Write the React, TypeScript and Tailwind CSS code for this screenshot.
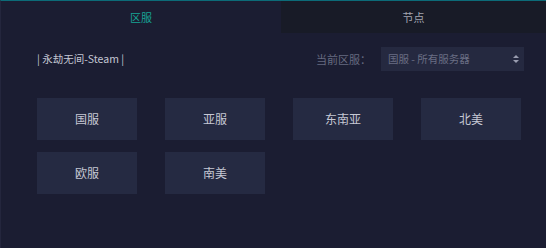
const regions = ["国服", "亚服", "东南亚", "北美", "欧服", "南美"];

export default function App() {
  return (
    <div
      className="w-[546px] h-[248px] bg-[#1b1d32] border-t border-[#0c6b78] border-l border-l-[#24263d] overflow-hidden flex flex-col"
      style={{ fontFamily: '"Noto Sans CJK SC", "Noto Sans", sans-serif' }}
    >
      {/* Tabs */}
      <div className="flex h-[32px] shrink-0">
        <div className="w-[280px] flex items-center justify-center text-[11px] text-[#16a394]">
          区服
        </div>
        <div className="flex-1 flex items-center justify-center bg-[#181b27] text-[11px] text-[#a3a5b0]">
          节点
        </div>
      </div>

      {/* Header row */}
      <div className="flex items-center justify-between pl-[36px] pr-[22px] mt-[14px] h-[24px]">
        <div className="text-[10.5px] text-[#c3c6d2]">| 永劫无间-Steam |</div>
        <div className="flex items-center gap-[10px]">
          <span className="text-[11px] text-[#676b80]">当前区服：</span>
          <div className="w-[143px] h-[24px] bg-[#252940] flex items-center justify-between pl-[7px] pr-[4px]">
            <span className="text-[10.5px] text-[#6a6e84]">国服 - 所有服务器</span>
            <svg width="8" height="10" viewBox="0 0 8 10" fill="#9a9db0">
              <path d="M4 1 L7 4 H1 Z" />
              <path d="M4 9 L7 6 H1 Z" />
            </svg>
          </div>
        </div>
      </div>

      {/* Region grid */}
      <div className="grid grid-cols-[repeat(4,100px)] gap-x-[28px] gap-y-[12px] pl-[36px] mt-[27px]">
        {regions.map((r) => (
          <button
            key={r}
            className="h-[42px] bg-[#252a42] text-[12px] text-[#c6c8d4] flex items-center justify-center"
          >
            {r}
          </button>
        ))}
      </div>
    </div>
  );
}
